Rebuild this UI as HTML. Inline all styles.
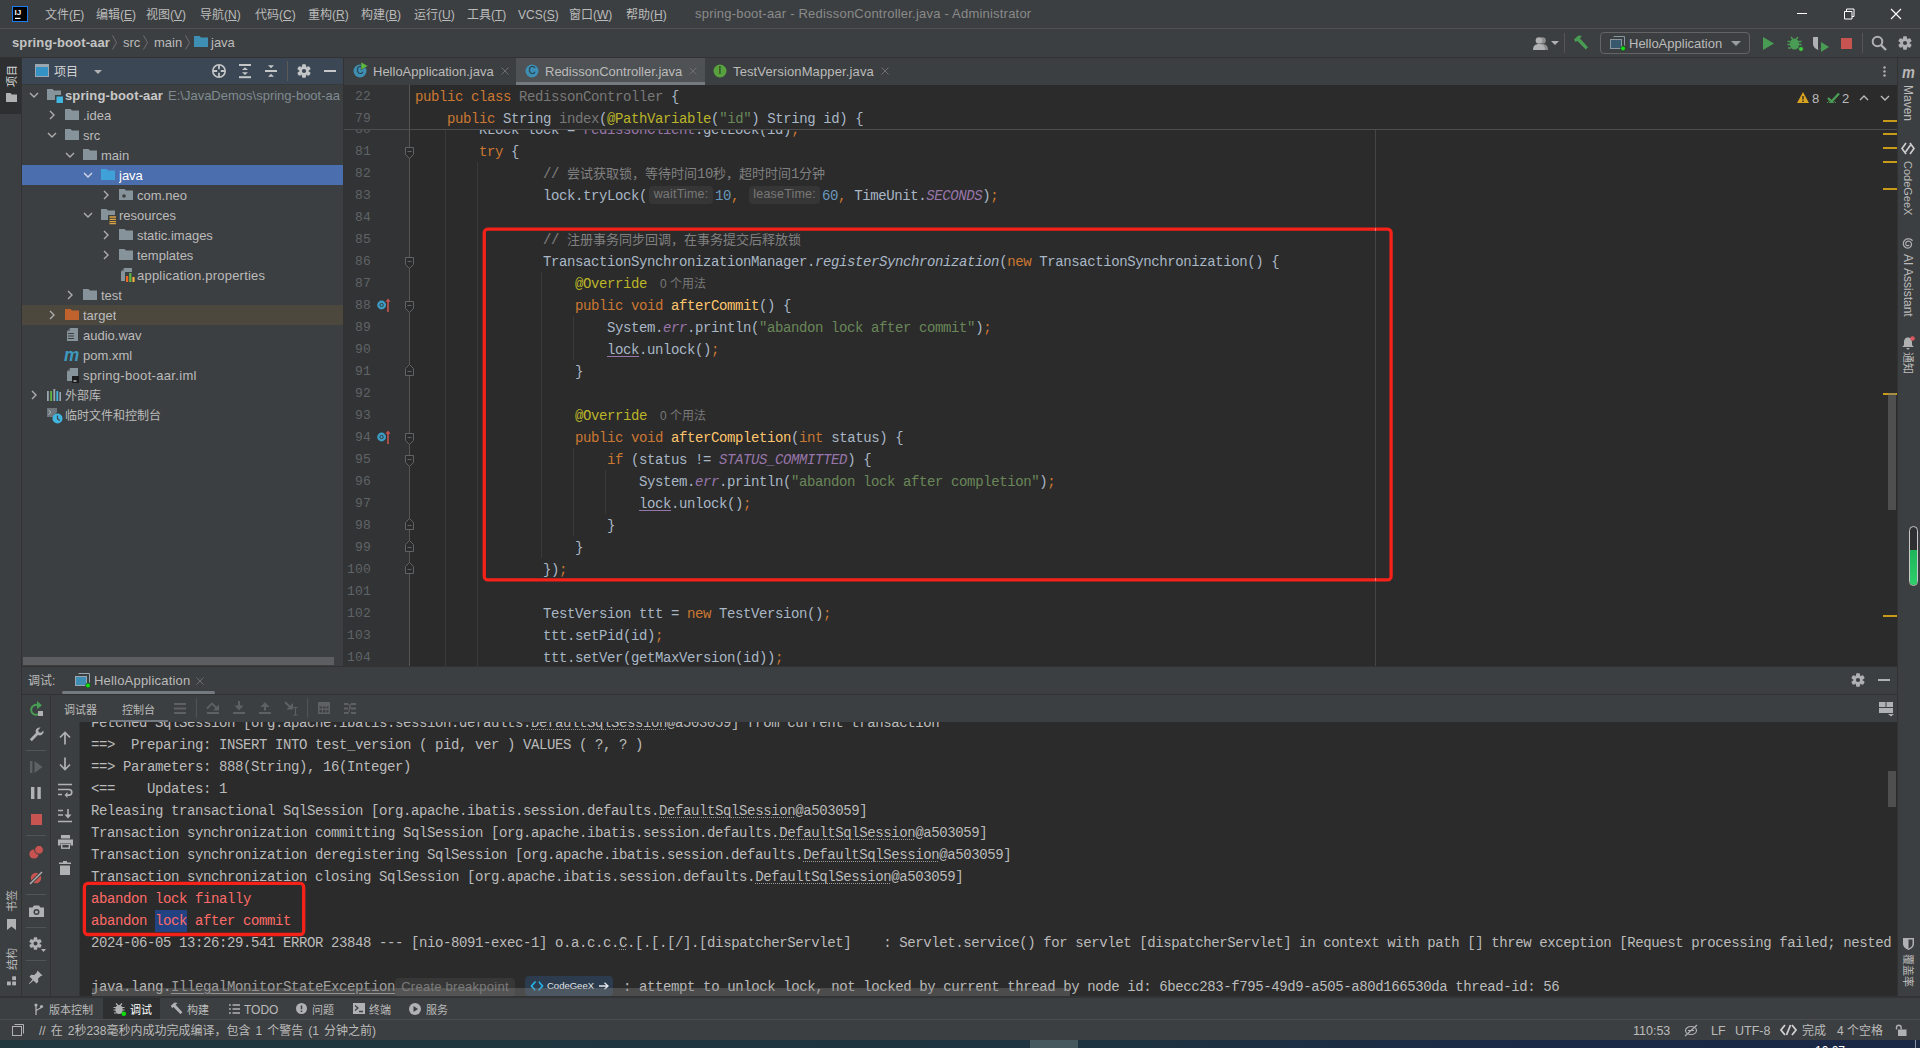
<!DOCTYPE html><html><head><meta charset="utf-8"><title>spring-boot-aar</title><style>
*{box-sizing:border-box;margin:0;padding:0}
html,body{width:1920px;height:1048px;overflow:hidden;background:#3c3f41}
body{position:relative;font-family:"Liberation Sans","Noto Sans CJK SC",sans-serif;font-size:13px;color:#bbbbbb;-webkit-font-smoothing:antialiased}
.a{position:absolute;white-space:pre}
.t{position:absolute;white-space:pre;line-height:20px;height:20px}
.c{font-size:12px}
.mono{font-family:"Liberation Mono","Noto Sans CJK SC",monospace;font-size:13.333px}
.cl{position:absolute;left:415px;height:22px;line-height:22px;white-space:pre;font-family:"Liberation Mono","Noto Sans CJK SC",monospace;font-size:14px;letter-spacing:-0.4px;color:#a9b7c6;padding-top:1px}
.z{font-size:13px;letter-spacing:0}
.ln{position:absolute;left:344px;width:27px;text-align:right;height:22px;line-height:22px;font-family:"Liberation Mono","Noto Sans CJK SC",monospace;font-size:13px;letter-spacing:0.200px;color:#606366;padding-top:1px}
.k{color:#cc7832} .s{color:#6a8759} .n{color:#6897bb} .cm{color:#808080} .an{color:#bbb529}
.f{color:#9876aa;font-style:italic} .m{color:#ffc66d} .i{font-style:italic} .g{color:#787878}
.u{text-decoration:underline;text-decoration-color:#9876aa;text-underline-offset:2px}
.hint{letter-spacing:0;font-family:"Liberation Sans","Noto Sans CJK SC",sans-serif;font-size:12px;color:#787878;background:#363636;border-radius:4px;padding:1px 4px 2px 4px}
.us{letter-spacing:0;font-family:"Liberation Sans","Noto Sans CJK SC",sans-serif;font-size:12px;color:#787878;padding-top:1px}
.co{position:absolute;left:91px;height:22px;line-height:22px;white-space:pre;font-family:"Liberation Mono","Noto Sans CJK SC",monospace;font-size:14px;letter-spacing:-0.4px;color:#bbbbbb;padding-top:1px}
.du{text-decoration:underline dotted #9a9a9a;text-decoration-thickness:1px;text-underline-offset:2px}
.r{color:#ff6b68}
.ig{position:absolute;width:1px;background:#393939}
svg{position:absolute;overflow:visible}
</style></head><body><div class="a" style="left:0px;top:0px;width:1920px;height:1048px;background:#3c3f41;"></div><div class="a" style="left:0px;top:28px;width:1920px;height:1px;background:#515151;"></div><div class="a" style="left:0px;top:57px;width:1920px;height:1px;background:#323232;"></div><div class="a" style="left:0px;top:58px;width:22px;height:56px;background:#2d2f30;"></div><div class="a" style="left:22px;top:58px;width:321px;height:26px;background:#3b4754;"></div><div class="a" style="left:22px;top:84px;width:321px;height:1px;background:#36393b;"></div><div class="a" style="left:21px;top:58px;width:1px;height:939px;background:#323232;"></div><div class="a" style="left:343px;top:58px;width:1px;height:608px;background:#323232;"></div><div class="a" style="left:344px;top:85px;width:1553px;height:581px;background:#2b2b2b;"></div><div class="a" style="left:344px;top:85px;width:65px;height:581px;background:#313335;"></div><div class="a" style="left:409px;top:85px;width:1px;height:581px;background:#555555;"></div><div class="a" style="left:1897px;top:58px;width:1px;height:940px;background:#323232;"></div><div class="a" style="left:22px;top:666px;width:1875px;height:1px;background:#323232;"></div><div class="a" style="left:79px;top:722px;width:1px;height:274px;background:#323435;"></div><div class="a" style="left:80px;top:722px;width:1817px;height:274px;background:#2b2b2b;"></div><div class="a" style="left:0px;top:996px;width:1920px;height:2px;background:#323334;"></div><div class="a" style="left:0px;top:1019px;width:1920px;height:1px;background:#4a4c4d;"></div><div class="a" style="left:0px;top:1040px;width:1920px;height:8px;background:linear-gradient(90deg,#21383f 0%,#1e3440 55%,#1a2946 80%,#1a2846 100%);"></div><div class="a" style="left:1030px;top:1040px;width:48px;height:8px;background:#45595f;"></div><div class="a" style="left:1915px;top:1040px;width:1px;height:8px;background:#8a94a3;"></div><div class="a" style="left:1815px;top:1045px;height:3px;width:40px;overflow:hidden;color:#fff;font-size:12px;line-height:12px">10:07</div><svg style="left:12px;top:6px" width="16" height="16" viewBox="0 0 16 16"><rect x="0.5" y="0.5" width="15" height="15" fill="#000" stroke="#1e7bf0" stroke-width="1"/><text x="2.6" y="9" font-family="Liberation Sans,sans-serif" font-weight="700" font-size="8" fill="#fff">IJ</text><rect x="3" y="11.800" width="5.500" height="1.200" fill="#fff"/></svg><div class="a c" style="left:45px;top:5px;height:20px;line-height:20px;color:#bbbbbb">文件(<span style="text-decoration:underline">F</span>)</div><div class="a c" style="left:96px;top:5px;height:20px;line-height:20px;color:#bbbbbb">编辑(<span style="text-decoration:underline">E</span>)</div><div class="a c" style="left:146px;top:5px;height:20px;line-height:20px;color:#bbbbbb">视图(<span style="text-decoration:underline">V</span>)</div><div class="a c" style="left:200px;top:5px;height:20px;line-height:20px;color:#bbbbbb">导航(<span style="text-decoration:underline">N</span>)</div><div class="a c" style="left:255px;top:5px;height:20px;line-height:20px;color:#bbbbbb">代码(<span style="text-decoration:underline">C</span>)</div><div class="a c" style="left:308px;top:5px;height:20px;line-height:20px;color:#bbbbbb">重构(<span style="text-decoration:underline">R</span>)</div><div class="a c" style="left:361px;top:5px;height:20px;line-height:20px;color:#bbbbbb">构建(<span style="text-decoration:underline">B</span>)</div><div class="a c" style="left:414px;top:5px;height:20px;line-height:20px;color:#bbbbbb">运行(<span style="text-decoration:underline">U</span>)</div><div class="a c" style="left:467px;top:5px;height:20px;line-height:20px;color:#bbbbbb">工具(<span style="text-decoration:underline">T</span>)</div><div class="a c" style="left:518px;top:5px;height:20px;line-height:20px;color:#bbbbbb">VCS(<span style="text-decoration:underline">S</span>)</div><div class="a c" style="left:569px;top:5px;height:20px;line-height:20px;color:#bbbbbb">窗口(<span style="text-decoration:underline">W</span>)</div><div class="a c" style="left:626px;top:5px;height:20px;line-height:20px;color:#bbbbbb">帮助(<span style="text-decoration:underline">H</span>)</div><div class="a " style="left:695px;top:4px;height:20px;line-height:20px;color:#8a8a8a;letter-spacing:0.210px">spring-boot-aar - RedissonController.java - Administrator</div><svg style="left:1797px;top:13px" width="10" height="1" viewBox="0 0 10 1"><rect width="10" height="1" fill="#ffffff"/></svg><svg style="left:1844px;top:8px" width="11" height="11" viewBox="0 0 11 11"><path d="M0.500 3.500h7.500v7.500h-7.500z M2.500 3.500v-2.500h7.500v7.500h-2" fill="none" stroke="#ffffff" stroke-width="1"/></svg><svg style="left:1891px;top:9px" width="10" height="10" viewBox="0 0 10 10"><path d="M0 0l10 10M10 0l-10 10" stroke="#ffffff" stroke-width="1.100" fill="none"/></svg><div class="a " style="left:12px;top:33px;height:20px;line-height:20px;font-weight:700;color:#c4c4c4;letter-spacing:0.130px">spring-boot-aar</div><svg style="left:112px;top:35px" width="5" height="15" viewBox="0 0 5 15"><path d="M0.5 0.5l4 7-4 7" fill="none" stroke="#6e6e6e" stroke-width="1"/></svg><div class="a " style="left:123px;top:33px;height:20px;line-height:20px;">src</div><svg style="left:143px;top:35px" width="5" height="15" viewBox="0 0 5 15"><path d="M0.5 0.5l4 7-4 7" fill="none" stroke="#6e6e6e" stroke-width="1"/></svg><div class="a " style="left:154px;top:33px;height:20px;line-height:20px;">main</div><svg style="left:185px;top:35px" width="5" height="15" viewBox="0 0 5 15"><path d="M0.5 0.5l4 7-4 7" fill="none" stroke="#6e6e6e" stroke-width="1"/></svg><svg style="left:194px;top:36px" width="14" height="11" viewBox="0 0 14 11"><path d="M0 0h5.5l1.5 1.500H14v9.500H0z" fill="#3e8fb3"/></svg><div class="a " style="left:211px;top:33px;height:20px;line-height:20px;">java</div><svg style="left:1533px;top:36px" width="16" height="14" viewBox="0 0 16 14"><circle cx="9.5" cy="4.5" r="3.3" fill="#8c8c8c"/><path d="M4 14c0-4 2-6 5.5-6s5.5 2 5.5 6z" fill="#8c8c8c"/><circle cx="6" cy="4.5" r="3.3" fill="#afb1b3"/><path d="M0 14c0-4 2-6 6-6s6 2 6 6z" fill="#afb1b3"/></svg><svg style="left:1551px;top:41px" width="8" height="4" viewBox="0 0 8 4"><path d="M0 0h8l-4 4z" fill="#afb1b3"/></svg><div class="a" style="left:1564px;top:33px;width:1px;height:20px;background:#555555;"></div><svg style="left:1573px;top:35px" width="16" height="16" viewBox="0 0 16 16"><path d="M1 4.5L5.5 0.5l3.5 0.5-2.2 2.2 8.2 9-2.3 2.3-8.5-8.7-1.5 1.5z" fill="#499c54"/></svg><div class="a" style="left:1600px;top:32px;width:150px;height:22px;border:1px solid #646464;border-radius:4px"></div><svg style="left:1610px;top:36px" width="16" height="15" viewBox="0 0 16 15"><path d="M3.5 0.5h11v9" fill="none" stroke="#8a969d" stroke-width="1"/><rect x="0.5" y="3.5" width="11" height="9" fill="#38596d" stroke="#8a969d"/><circle cx="13" cy="12.5" r="2.4" fill="#10e010" stroke="#2b2b2b" stroke-width="0.6"/></svg><div class="a " style="left:1629px;top:34px;height:20px;line-height:20px;color:#bbbbbb">HelloApplication</div><svg style="left:1731px;top:41px" width="10" height="5" viewBox="0 0 10 5"><path d="M0 0h10l-5 5z" fill="#9a9da0"/></svg><svg style="left:1763px;top:37px" width="11" height="13" viewBox="0 0 11 13"><path d="M0 0l11 6.500-11 6.500z" fill="#499c54"/></svg><svg style="left:1787px;top:35px" width="17" height="17" viewBox="0 0 17 17"><ellipse cx="7.5" cy="9" rx="4.6" ry="5.6" fill="#499c54"/><path d="M4 2l2 2.5M11 2l-2 2.5M0.5 6.5h3M0.5 9.5h3M1 13h3M14.5 6.5h-3M14.5 9.5h-3M14 13h-3" stroke="#499c54" stroke-width="1.4" fill="none"/><circle cx="14" cy="14" r="2.4" fill="#3dd13d" stroke="#3c3f41" stroke-width="0.8"/></svg><svg style="left:1812px;top:36px" width="17" height="16" viewBox="0 0 17 16"><path d="M1 1h10v7c0 3-3 5-5 6-2-1-5-3-5-6z" fill="#afb1b3"/><path d="M6 1h5v7c0 3-3 5-5 6z" fill="#3c3f41"/><path d="M9 6l8 5-8 5z" fill="#499c54"/></svg><div class="a" style="left:1841px;top:38px;width:11px;height:11px;background:#c75450;"></div><div class="a" style="left:1862px;top:33px;width:1px;height:20px;background:#555555;"></div><svg style="left:1871px;top:35px" width="16" height="16" viewBox="0 0 16 16"><circle cx="6.5" cy="6.5" r="4.8" fill="none" stroke="#afb1b3" stroke-width="2"/><path d="M10 10l5 5" stroke="#afb1b3" stroke-width="2.4"/></svg><svg style="left:1898px;top:36px" width="14" height="14" viewBox="0 0 14 14"><g transform="translate(7 7)"><path d="M-1.600 -6.800h3.200l0.700 3h-4.600z" transform="rotate(0)" fill="#afb1b3"/><path d="M-1.600 -6.800h3.200l0.700 3h-4.600z" transform="rotate(60)" fill="#afb1b3"/><path d="M-1.600 -6.800h3.200l0.700 3h-4.600z" transform="rotate(120)" fill="#afb1b3"/><path d="M-1.600 -6.800h3.200l0.700 3h-4.600z" transform="rotate(180)" fill="#afb1b3"/><path d="M-1.600 -6.800h3.200l0.700 3h-4.600z" transform="rotate(240)" fill="#afb1b3"/><path d="M-1.600 -6.800h3.200l0.700 3h-4.600z" transform="rotate(300)" fill="#afb1b3"/><circle r="4.400" fill="#afb1b3"/><circle r="2.100" fill="#3c3f41"/></g></svg><div class="a c" style="left:12px;top:87px;height:16px;line-height:16px;color:#d6d6d6;font-size:11px;transform-origin:0 0;transform:rotate(-90deg) translate(0,-8px)">项目</div><svg style="left:6px;top:93px" width="11" height="9" viewBox="0 0 11 9"><path d="M0 0h4.5l1.2 1.5H11V9H0z" fill="#afb1b3"/></svg><div class="a c" style="left:12px;top:912px;height:16px;line-height:16px;color:#bbbbbb;font-size:11px;transform-origin:0 0;transform:rotate(-90deg) translate(0,-8px)">书签</div><svg style="left:7px;top:919px" width="9" height="11" viewBox="0 0 9 11"><path d="M0 0h9v11l-4.5-3.5L0 11z" fill="#afb1b3"/></svg><div class="a c" style="left:12px;top:970px;height:16px;line-height:16px;color:#bbbbbb;font-size:11px;transform-origin:0 0;transform:rotate(-90deg) translate(0,-8px)">结构</div><svg style="left:7px;top:976px" width="10" height="10" viewBox="0 0 10 10"><rect x="0" y="5.500" width="3.800" height="3.800" fill="#afb1b3"/><rect x="5.200" y="5.500" width="3.800" height="3.800" fill="#afb1b3"/><rect x="5.200" y="0.300" width="3.800" height="3.800" fill="#afb1b3"/></svg><svg style="left:35px;top:64px" width="14" height="14" viewBox="0 0 14 14"><rect x="0.5" y="0.5" width="13" height="12" fill="#3592c4" stroke="#9aa7b0"/><rect x="0.5" y="0.5" width="13" height="2.5" fill="#9aa7b0"/></svg><div class="a c" style="left:54px;top:62px;height:20px;line-height:20px;color:#d4d4d4">项目</div><svg style="left:94px;top:70px" width="8" height="4" viewBox="0 0 8 4"><path d="M0 0h8l-4 4z" fill="#afb1b3"/></svg><svg style="left:212px;top:64px" width="14" height="14" viewBox="0 0 14 14"><circle cx="7" cy="7" r="6.200" fill="none" stroke="#c4c6c7" stroke-width="1.600"/><path d="M7 1v4.200M7 8.800v4.200M1 7h4.200M8.800 7h4.200" stroke="#c4c6c7" stroke-width="1.800"/></svg><svg style="left:239px;top:64px" width="12" height="14" viewBox="0 0 12 14"><rect x="0" y="0" width="12" height="2" fill="#c4c6c7"/><rect x="0" y="12.200" width="12" height="2" fill="#c4c6c7"/><path d="M6 3.300l3 2.700h-6zM6 10.900l3-2.700h-6z" fill="#c4c6c7"/></svg><svg style="left:265px;top:64px" width="12" height="14" viewBox="0 0 12 14"><rect x="0" y="6" width="12" height="2" fill="#c4c6c7"/><path d="M6 4.300l3-3h-6zM6 9.700l3 3h-6z" fill="#c4c6c7"/></svg><div class="a" style="left:287px;top:61px;width:1px;height:20px;background:#5a5a58;"></div><svg style="left:297px;top:64px" width="14" height="14" viewBox="0 0 14 14"><g transform="translate(7 7)"><path d="M-1.600 -6.800h3.200l0.700 3h-4.600z" transform="rotate(0)" fill="#c4c6c7"/><path d="M-1.600 -6.800h3.200l0.700 3h-4.600z" transform="rotate(60)" fill="#c4c6c7"/><path d="M-1.600 -6.800h3.200l0.700 3h-4.600z" transform="rotate(120)" fill="#c4c6c7"/><path d="M-1.600 -6.800h3.200l0.700 3h-4.600z" transform="rotate(180)" fill="#c4c6c7"/><path d="M-1.600 -6.800h3.200l0.700 3h-4.600z" transform="rotate(240)" fill="#c4c6c7"/><path d="M-1.600 -6.800h3.200l0.700 3h-4.600z" transform="rotate(300)" fill="#c4c6c7"/><circle r="4.400" fill="#c4c6c7"/><circle r="2.100" fill="#3b4754"/></g></svg><div class="a" style="left:324px;top:70px;width:12px;height:2px;background:#c4c6c7;"></div><div class="a" style="left:22px;top:165px;width:321px;height:20px;background:#4b6eaf;"></div><div class="a" style="left:22px;top:305px;width:321px;height:20px;background:#4c483e;"></div><svg style="left:29px;top:92px" width="10" height="6" viewBox="0 0 10 6"><path d="M1 1l4 4 4-4" fill="none" stroke="#adadad" stroke-width="1.4"/></svg><svg style="left:47px;top:89px" width="14" height="11" viewBox="0 0 14 11"><path d="M0 0h5.5l1.5 1.500H14v9.500H0z" fill="#87939a"/></svg><svg style="left:55px;top:95px" width="8" height="8" viewBox="0 0 8 8"><rect width="8" height="8" fill="#3c3f41"/><rect x="1.5" y="1.5" width="6.5" height="6.5" fill="#40b6e0"/></svg><div class="a" style="left:65px;top:86px;height:20px;line-height:20px;color:#bbbbbb;max-width:278px;overflow:hidden"><b style="color:#c8c8c8;letter-spacing:0.130px">spring-boot-aar</b><span style="color:#7f8b91;margin-left:5px">E:\JavaDemos\spring-boot-aa</span></div><svg style="left:49px;top:110px" width="6" height="10" viewBox="0 0 6 10"><path d="M1 1l4 4-4 4" fill="none" stroke="#adadad" stroke-width="1.4"/></svg><svg style="left:65px;top:109px" width="14" height="11" viewBox="0 0 14 11"><path d="M0 0h5.5l1.5 1.500H14v9.500H0z" fill="#87939a"/></svg><div class="a" style="left:83px;top:106px;height:20px;line-height:20px;color:#bbbbbb;max-width:260px;overflow:hidden">.idea</div><svg style="left:47px;top:132px" width="10" height="6" viewBox="0 0 10 6"><path d="M1 1l4 4 4-4" fill="none" stroke="#adadad" stroke-width="1.4"/></svg><svg style="left:65px;top:129px" width="14" height="11" viewBox="0 0 14 11"><path d="M0 0h5.5l1.5 1.500H14v9.500H0z" fill="#87939a"/></svg><div class="a" style="left:83px;top:126px;height:20px;line-height:20px;color:#bbbbbb;max-width:260px;overflow:hidden">src</div><svg style="left:65px;top:152px" width="10" height="6" viewBox="0 0 10 6"><path d="M1 1l4 4 4-4" fill="none" stroke="#adadad" stroke-width="1.4"/></svg><svg style="left:83px;top:149px" width="14" height="11" viewBox="0 0 14 11"><path d="M0 0h5.5l1.5 1.500H14v9.500H0z" fill="#87939a"/></svg><div class="a" style="left:101px;top:146px;height:20px;line-height:20px;color:#bbbbbb;max-width:242px;overflow:hidden">main</div><svg style="left:83px;top:172px" width="10" height="6" viewBox="0 0 10 6"><path d="M1 1l4 4 4-4" fill="none" stroke="#d0d7e5" stroke-width="1.4"/></svg><svg style="left:101px;top:169px" width="14" height="11" viewBox="0 0 14 11"><path d="M0 0h5.5l1.5 1.500H14v9.500H0z" fill="#40a1d8"/></svg><div class="a" style="left:119px;top:166px;height:20px;line-height:20px;color:#ffffff;max-width:224px;overflow:hidden">java</div><svg style="left:103px;top:190px" width="6" height="10" viewBox="0 0 6 10"><path d="M1 1l4 4-4 4" fill="none" stroke="#adadad" stroke-width="1.4"/></svg><svg style="left:119px;top:189px" width="14" height="11" viewBox="0 0 14 11"><path d="M0 0h5.5l1.5 1.500H14v9.500H0z" fill="#87939a"/></svg><svg style="left:122px;top:194px" width="4" height="4" viewBox="0 0 4 4"><circle cx="2" cy="2" r="1.8" fill="#3c3f41"/></svg><div class="a" style="left:137px;top:186px;height:20px;line-height:20px;color:#bbbbbb;max-width:206px;overflow:hidden">com.neo</div><svg style="left:83px;top:212px" width="10" height="6" viewBox="0 0 10 6"><path d="M1 1l4 4 4-4" fill="none" stroke="#adadad" stroke-width="1.4"/></svg><svg style="left:101px;top:209px" width="14" height="11" viewBox="0 0 14 11"><path d="M0 0h5.5l1.5 1.500H14v9.500H0z" fill="#87939a"/></svg><svg style="left:108px;top:215px" width="8" height="9" viewBox="0 0 8 9"><rect width="8" height="9" fill="#3c3f41"/><path d="M1.5 2h6.5M1.5 4.3h6.5M1.5 6.6h6.5M1.5 8.6h6.5" stroke="#d9a343" stroke-width="1.3"/></svg><div class="a" style="left:119px;top:206px;height:20px;line-height:20px;color:#bbbbbb;max-width:224px;overflow:hidden">resources</div><svg style="left:103px;top:230px" width="6" height="10" viewBox="0 0 6 10"><path d="M1 1l4 4-4 4" fill="none" stroke="#adadad" stroke-width="1.4"/></svg><svg style="left:119px;top:229px" width="14" height="11" viewBox="0 0 14 11"><path d="M0 0h5.5l1.5 1.500H14v9.500H0z" fill="#87939a"/></svg><div class="a" style="left:137px;top:226px;height:20px;line-height:20px;color:#bbbbbb;max-width:206px;overflow:hidden">static.images</div><svg style="left:103px;top:250px" width="6" height="10" viewBox="0 0 6 10"><path d="M1 1l4 4-4 4" fill="none" stroke="#adadad" stroke-width="1.4"/></svg><svg style="left:119px;top:249px" width="14" height="11" viewBox="0 0 14 11"><path d="M0 0h5.5l1.5 1.500H14v9.500H0z" fill="#87939a"/></svg><div class="a" style="left:137px;top:246px;height:20px;line-height:20px;color:#bbbbbb;max-width:206px;overflow:hidden">templates</div><svg style="left:120px;top:268px" width="13" height="14" viewBox="0 0 13 14"><path d="M4.5 0H12v13H1V3.5z" fill="#87939a"/><path d="M4 0L1 3h3z" fill="#5d666b"/></svg><svg style="left:126px;top:272px" width="9" height="10" viewBox="0 0 9 10"><rect x="-1" y="0" width="10" height="10" fill="#3c3f41"/><rect x="0" y="4" width="2.2" height="6" fill="#f26522"/><rect x="3.2" y="1" width="2.2" height="9" fill="#62b543"/><rect x="6.4" y="5" width="2.2" height="5" fill="#f4af3d"/></svg><div class="a" style="left:137px;top:266px;height:20px;line-height:20px;color:#bbbbbb;max-width:206px;overflow:hidden"><span style="letter-spacing:0.210px">application.properties</span></div><svg style="left:67px;top:290px" width="6" height="10" viewBox="0 0 6 10"><path d="M1 1l4 4-4 4" fill="none" stroke="#adadad" stroke-width="1.4"/></svg><svg style="left:83px;top:289px" width="14" height="11" viewBox="0 0 14 11"><path d="M0 0h5.5l1.5 1.500H14v9.500H0z" fill="#87939a"/></svg><div class="a" style="left:101px;top:286px;height:20px;line-height:20px;color:#bbbbbb;max-width:242px;overflow:hidden">test</div><svg style="left:49px;top:310px" width="6" height="10" viewBox="0 0 6 10"><path d="M1 1l4 4-4 4" fill="none" stroke="#adadad" stroke-width="1.4"/></svg><svg style="left:65px;top:309px" width="14" height="11" viewBox="0 0 14 11"><path d="M0 0h5.5l1.5 1.500H14v9.500H0z" fill="#c0622d"/></svg><div class="a" style="left:83px;top:306px;height:20px;line-height:20px;color:#bbbbbb;max-width:260px;overflow:hidden">target</div><svg style="left:66px;top:328px" width="13" height="14" viewBox="0 0 13 14"><path d="M4.5 0H12v13H1V3.5z" fill="#87939a"/><path d="M4 0L1 3h3z" fill="#5d666b"/></svg><svg style="left:68px;top:333px" width="8" height="7" viewBox="0 0 8 7"><path d="M0 0.5h6M0 3h6M0 5.5h6" stroke="#3c3f41" stroke-width="1.1"/></svg><div class="a" style="left:83px;top:326px;height:20px;line-height:20px;color:#bbbbbb;max-width:260px;overflow:hidden">audio.wav</div><div class="a" style="left:64px;top:343px;height:24px;line-height:24px;font-weight:700;font-style:italic;font-size:19px;color:#3e9ac0;transform-origin:0 50%;transform:scaleX(0.900)">m</div><div class="a" style="left:83px;top:346px;height:20px;line-height:20px;color:#bbbbbb;max-width:260px;overflow:hidden">pom.xml</div><svg style="left:66px;top:368px" width="13" height="14" viewBox="0 0 13 14"><path d="M4.5 0H12v13H1V3.5z" fill="#87939a"/><path d="M4 0L1 3h3z" fill="#5d666b"/></svg><svg style="left:72px;top:376px" width="7" height="7" viewBox="0 0 7 7"><rect width="7" height="7" fill="#1d1d1d"/><rect x="1.5" y="4.5" width="3" height="1" fill="#fff"/></svg><div class="a" style="left:83px;top:366px;height:20px;line-height:20px;color:#bbbbbb;max-width:260px;overflow:hidden"><span style="letter-spacing:0.320px">spring-boot-aar.iml</span></div><svg style="left:31px;top:390px" width="6" height="10" viewBox="0 0 6 10"><path d="M1 1l4 4-4 4" fill="none" stroke="#adadad" stroke-width="1.4"/></svg><svg style="left:47px;top:389px" width="14" height="12" viewBox="0 0 14 12"><rect x="0" y="2" width="1.8" height="10" fill="#9aa7b0"/><rect x="3.2" y="2" width="1.8" height="10" fill="#62b543"/><rect x="6.4" y="0" width="1.8" height="12" fill="#9aa7b0"/><rect x="9.4" y="2" width="1.8" height="10" fill="#40b6e0"/><rect x="12.4" y="3" width="1.6" height="9" fill="#9aa7b0"/></svg><div class="a" style="left:65px;top:386px;height:20px;line-height:20px;color:#bbbbbb;max-width:278px;overflow:hidden"><span class="c">外部库</span></div><svg style="left:47px;top:408px" width="16" height="16" viewBox="0 0 16 16"><path d="M0 0h10v4l-4 5H0z" fill="#6b757b"/><path d="M1.5 2l2.5 2.3-2.5 2.3" stroke="#b4bcc0" stroke-width="1" fill="none"/><circle cx="10.5" cy="10.5" r="5" fill="#40b6e0"/><path d="M10.5 7.5v3.3l2.2 1.6" stroke="#3c3f41" stroke-width="1.2" fill="none"/></svg><div class="a" style="left:65px;top:406px;height:20px;line-height:20px;color:#bbbbbb;max-width:278px;overflow:hidden"><span class="c">临时文件和控制台</span></div><div class="a" style="left:23px;top:657px;width:311px;height:8px;background:#5c5e60;"></div><div class="a" style="left:516px;top:58px;width:189px;height:27px;background:#4e5254;"></div><div class="a" style="left:516px;top:82px;width:189px;height:3px;background:#747a80;"></div><svg style="left:353px;top:64px" width="14" height="14" viewBox="0 0 14 14"><circle cx="7" cy="7" r="6.5" fill="#3e8fb3"/><text x="7" y="10.3" text-anchor="middle" font-family="Liberation Sans,sans-serif" font-size="10" font-weight="400" fill="#23343d">C</text></svg><svg style="left:361px;top:62px" width="7" height="8" viewBox="0 0 7 8"><path d="M0 0l7 4-7 4z" fill="#5fb840" stroke="#3c3f41" stroke-width="0.500"/></svg><div class="a " style="left:373px;top:62px;height:20px;line-height:20px;">HelloApplication.java</div><svg style="left:501px;top:67px" width="8" height="8" viewBox="0 0 8 8"><path d="M0.5 0.5l7 7M7.5 0.5l-7 7" stroke="#6e6e6e" stroke-width="1" fill="none"/></svg><svg style="left:525px;top:64px" width="14" height="14" viewBox="0 0 14 14"><circle cx="7" cy="7" r="6.5" fill="#3e8fb3"/><text x="7" y="10.3" text-anchor="middle" font-family="Liberation Sans,sans-serif" font-size="10" font-weight="400" fill="#23343d">C</text></svg><div class="a " style="left:545px;top:62px;height:20px;line-height:20px;">RedissonController.java</div><svg style="left:689px;top:67px" width="8" height="8" viewBox="0 0 8 8"><path d="M0.5 0.5l7 7M7.5 0.5l-7 7" stroke="#6e6e6e" stroke-width="1" fill="none"/></svg><svg style="left:713px;top:64px" width="14" height="14" viewBox="0 0 14 14"><circle cx="7" cy="7" r="6.5" fill="#59a13f"/><text x="7" y="10.3" text-anchor="middle" font-family="Liberation Sans,sans-serif" font-size="10" font-weight="400" fill="#1f3318">I</text></svg><div class="a " style="left:733px;top:62px;height:20px;line-height:20px;letter-spacing:0.130px">TestVersionMapper.java</div><svg style="left:881px;top:67px" width="8" height="8" viewBox="0 0 8 8"><path d="M0.5 0.5l7 7M7.5 0.5l-7 7" stroke="#6e6e6e" stroke-width="1" fill="none"/></svg><svg style="left:1883px;top:66px" width="3" height="11" viewBox="0 0 3 11"><circle cx="1.5" cy="1.5" r="1.2" fill="#afb1b3"/><circle cx="1.5" cy="5.5" r="1.2" fill="#afb1b3"/><circle cx="1.5" cy="9.5" r="1.2" fill="#afb1b3"/></svg><div class="a" style="left:445px;top:118px;width:1px;height:550px;background:#393939;"></div><div class="a" style="left:477px;top:162px;width:1px;height:506px;background:#393939;"></div><div class="a" style="left:541px;top:272px;width:1px;height:286px;background:#393939;"></div><div class="a" style="left:573px;top:316px;width:1px;height:44px;background:#393939;"></div><div class="a" style="left:573px;top:448px;width:1px;height:88px;background:#393939;"></div><div class="a" style="left:605px;top:470px;width:1px;height:44px;background:#393939;"></div><div class="a" style="left:1375px;top:85px;width:1px;height:581px;background:#454545;"></div><div class="a" style="left:344px;top:130px;width:1553px;height:536px;overflow:hidden"><div class="ln" style="left:0;top:-12px">80</div><div class="cl" style="left:71px;top:-12px">        RLock lock = <span style="color:#9876aa">redissonClient</span>.getLock(id)<span class="k">;</span></div><div class="ln" style="left:0;top:10px">81</div><div class="cl" style="left:71px;top:10px">        <span class="k">try</span> {</div><div class="ln" style="left:0;top:32px">82</div><div class="cl" style="left:71px;top:32px">                <span class="cm">// <span class="z">尝试获取锁，等待时间</span>10<span class="z">秒，超时时间</span>1<span class="z">分钟</span></span></div><div class="ln" style="left:0;top:54px">83</div><div class="cl" style="left:71px;top:54px">                lock.tryLock(<span class="hint" style="display:inline-block;width:64px;margin:0 2px 0 2px;height:18px;line-height:17px;vertical-align:2px;text-align:center;padding:0;font-size:12.500px;letter-spacing:0.200px">waitTime:</span><span class="n">10</span><span class="k">,</span> <span class="hint" style="display:inline-block;width:71px;margin:0 2px 0 2px;height:18px;line-height:17px;vertical-align:2px;text-align:center;padding:0;font-size:12.500px;letter-spacing:0.200px">leaseTime:</span><span class="n">60</span><span class="k">,</span> TimeUnit.<span class="f">SECONDS</span>)<span class="k">;</span></div><div class="ln" style="left:0;top:76px">84</div><div class="ln" style="left:0;top:98px">85</div><div class="cl" style="left:71px;top:98px">                <span class="cm">// <span class="z">注册事务同步回调，在事务提交后释放锁</span></span></div><div class="ln" style="left:0;top:120px">86</div><div class="cl" style="left:71px;top:120px">                TransactionSynchronizationManager.<span class="i">registerSynchronization</span>(<span class="k">new</span> TransactionSynchronization() {</div><div class="ln" style="left:0;top:142px">87</div><div class="cl" style="left:71px;top:142px">                    <span class="an">@Override</span></div><div class="ln" style="left:0;top:164px">88</div><div class="cl" style="left:71px;top:164px">                    <span class="k">public void</span> <span class="m">afterCommit</span>() {</div><div class="ln" style="left:0;top:186px">89</div><div class="cl" style="left:71px;top:186px">                        System.<span class="f">err</span>.println(<span class="s">"abandon lock after commit"</span>)<span class="k">;</span></div><div class="ln" style="left:0;top:208px">90</div><div class="cl" style="left:71px;top:208px">                        <span class="u">lock</span>.unlock()<span class="k">;</span></div><div class="ln" style="left:0;top:230px">91</div><div class="cl" style="left:71px;top:230px">                    }</div><div class="ln" style="left:0;top:252px">92</div><div class="ln" style="left:0;top:274px">93</div><div class="cl" style="left:71px;top:274px">                    <span class="an">@Override</span></div><div class="ln" style="left:0;top:296px">94</div><div class="cl" style="left:71px;top:296px">                    <span class="k">public void</span> <span class="m">afterCompletion</span>(<span class="k">int</span> status) {</div><div class="ln" style="left:0;top:318px">95</div><div class="cl" style="left:71px;top:318px">                        <span class="k">if</span> (status != <span class="f">STATUS_COMMITTED</span>) {</div><div class="ln" style="left:0;top:340px">96</div><div class="cl" style="left:71px;top:340px">                            System.<span class="f">err</span>.println(<span class="s">"abandon lock after completion"</span>)<span class="k">;</span></div><div class="ln" style="left:0;top:362px">97</div><div class="cl" style="left:71px;top:362px">                            <span class="u">lock</span>.unlock()<span class="k">;</span></div><div class="ln" style="left:0;top:384px">98</div><div class="cl" style="left:71px;top:384px">                        }</div><div class="ln" style="left:0;top:406px">99</div><div class="cl" style="left:71px;top:406px">                    }</div><div class="ln" style="left:0;top:428px">100</div><div class="cl" style="left:71px;top:428px">                })<span class="k">;</span></div><div class="ln" style="left:0;top:450px">101</div><div class="ln" style="left:0;top:472px">102</div><div class="cl" style="left:71px;top:472px">                TestVersion ttt = <span class="k">new</span> TestVersion()<span class="k">;</span></div><div class="ln" style="left:0;top:494px">103</div><div class="cl" style="left:71px;top:494px">                ttt.setPid(id)<span class="k">;</span></div><div class="ln" style="left:0;top:516px">104</div><div class="cl" style="left:71px;top:516px">                ttt.setVer(getMaxVersion(id))<span class="k">;</span></div><div class="a us" style="left:316px;top:142px;height:22px;line-height:22px">0 个用法</div><div class="a us" style="left:316px;top:274px;height:22px;line-height:22px">0 个用法</div></div><div class="a" style="left:344px;top:85px;width:1553px;height:44px;background:#2b2b2b;"></div><div class="a" style="left:344px;top:85px;width:65px;height:44px;background:#313335;"></div><div class="a" style="left:409px;top:85px;width:1px;height:44px;background:#555555;"></div><div class="a" style="left:344px;top:129px;width:1553px;height:1px;background:#4e4e4e;"></div><div class="ln" style="top:85px">22</div><div class="ln" style="top:107px">79</div><div class="cl" style="top:85px"><span class="k">public class</span> <span class="g">RedissonController</span> {</div><div class="cl" style="top:107px">    <span class="k">public</span> String <span class="g">index</span>(<span class="an">@PathVariable</span>(<span class="s">"id"</span>) String id) {</div><svg style="left:405px;top:147px" width="9" height="12" viewBox="0 0 9 12"><path d="M0.5 0.5h8v7l-4 4-4-4z" fill="#2b2b2b" stroke="#606366"/><path d="M2.5 4.500h4" stroke="#606366"/></svg><svg style="left:405px;top:257px" width="9" height="12" viewBox="0 0 9 12"><path d="M0.5 0.5h8v7l-4 4-4-4z" fill="#2b2b2b" stroke="#606366"/><path d="M2.5 4.500h4" stroke="#606366"/></svg><svg style="left:405px;top:301px" width="9" height="12" viewBox="0 0 9 12"><path d="M0.5 0.5h8v7l-4 4-4-4z" fill="#2b2b2b" stroke="#606366"/><path d="M2.5 4.500h4" stroke="#606366"/></svg><svg style="left:405px;top:433px" width="9" height="12" viewBox="0 0 9 12"><path d="M0.5 0.5h8v7l-4 4-4-4z" fill="#2b2b2b" stroke="#606366"/><path d="M2.5 4.500h4" stroke="#606366"/></svg><svg style="left:405px;top:455px" width="9" height="12" viewBox="0 0 9 12"><path d="M0.5 0.5h8v7l-4 4-4-4z" fill="#2b2b2b" stroke="#606366"/><path d="M2.5 4.500h4" stroke="#606366"/></svg><svg style="left:405px;top:364px" width="9" height="12" viewBox="0 0 9 12"><path d="M0.5 11.5h8v-7l-4-4-4 4z" fill="#2b2b2b" stroke="#606366"/><path d="M2.5 7.500h4" stroke="#606366"/></svg><svg style="left:405px;top:518px" width="9" height="12" viewBox="0 0 9 12"><path d="M0.5 11.5h8v-7l-4-4-4 4z" fill="#2b2b2b" stroke="#606366"/><path d="M2.5 7.500h4" stroke="#606366"/></svg><svg style="left:405px;top:540px" width="9" height="12" viewBox="0 0 9 12"><path d="M0.5 11.5h8v-7l-4-4-4 4z" fill="#2b2b2b" stroke="#606366"/><path d="M2.5 7.500h4" stroke="#606366"/></svg><svg style="left:405px;top:562px" width="9" height="12" viewBox="0 0 9 12"><path d="M0.5 11.5h8v-7l-4-4-4 4z" fill="#2b2b2b" stroke="#606366"/><path d="M2.5 7.500h4" stroke="#606366"/></svg><svg style="left:377px;top:298px" width="14" height="14" viewBox="0 0 14 14"><circle cx="4.6" cy="7" r="4.4" fill="#3e9dc4"/><circle cx="4.6" cy="7" r="1.7" fill="none" stroke="#313335" stroke-width="0.9"/><path d="M11 14V2.5" stroke="#c75450" stroke-width="1.6"/><path d="M8.4 3.8L11 0.6l2.6 3.2z" fill="#c75450"/></svg><svg style="left:377px;top:430px" width="14" height="14" viewBox="0 0 14 14"><circle cx="4.6" cy="7" r="4.4" fill="#3e9dc4"/><circle cx="4.6" cy="7" r="1.7" fill="none" stroke="#313335" stroke-width="0.9"/><path d="M11 14V2.5" stroke="#c75450" stroke-width="1.6"/><path d="M8.4 3.8L11 0.6l2.6 3.2z" fill="#c75450"/></svg><svg style="left:482px;top:227px" width="912" height="355" viewBox="0 0 912 355"><rect x="2.250" y="2.200" width="906.850" height="350.700" rx="3.500" fill="none" stroke="#f6221a" stroke-width="3.300"/></svg><div class="a" style="left:1375px;top:228px;width:1px;height:3px;background:#f8766f;"></div><div class="a" style="left:1375px;top:578px;width:1px;height:3px;background:#f8766f;"></div><svg style="left:1797px;top:92px" width="12" height="11" viewBox="0 0 12 11"><path d="M6 0l6 11H0z" fill="#d9a31f"/><path d="M6 4v3.5M6 8.6v1.4" stroke="#2b2b2b" stroke-width="1.4"/></svg><div class="a " style="left:1812px;top:89px;height:20px;line-height:20px;color:#bbbbbb">8</div><svg style="left:1827px;top:92px" width="13" height="12" viewBox="0 0 13 12"><path d="M1 6l3.5 3.5L12 1.5" fill="none" stroke="#499c54" stroke-width="2.4"/><path d="M0 11l1.5-1.5L3 11l1.5-1.5L6 11l1.5-1.5L9 11" fill="none" stroke="#499c54" stroke-width="0.9"/></svg><div class="a " style="left:1842px;top:89px;height:20px;line-height:20px;color:#bbbbbb">2</div><svg style="left:1859px;top:95px" width="10" height="6" viewBox="0 0 10 6"><path d="M1 5l4-4 4 4" fill="none" stroke="#bbbbbb" stroke-width="1.4"/></svg><svg style="left:1880px;top:95px" width="10" height="6" viewBox="0 0 10 6"><path d="M1 1l4 4 4-4" fill="none" stroke="#bbbbbb" stroke-width="1.4"/></svg><div class="a" style="left:1883px;top:120px;width:14px;height:2px;background:#c79a17;"></div><div class="a" style="left:1883px;top:133px;width:14px;height:2px;background:#c79a17;"></div><div class="a" style="left:1883px;top:147px;width:14px;height:2px;background:#c79a17;"></div><div class="a" style="left:1883px;top:161px;width:14px;height:2px;background:#c79a17;"></div><div class="a" style="left:1883px;top:188px;width:14px;height:2px;background:#c79a17;"></div><div class="a" style="left:1883px;top:393px;width:14px;height:2px;background:#c79a17;"></div><div class="a" style="left:1883px;top:615px;width:14px;height:2px;background:#c79a17;"></div><div class="a" style="left:1888px;top:393px;width:8px;height:117px;background:rgba(128,128,128,0.42);"></div><div class="a" style="left:1902px;top:61px;height:24px;line-height:24px;font-weight:700;font-style:italic;font-size:17px;color:#b8b8b8;transform-origin:0 50%;transform:scaleX(0.850)">m</div><div class="a " style="left:1908px;top:85px;height:16px;line-height:16px;color:#bbbbbb;font-size:12px;transform-origin:0 0;transform:rotate(90deg) translate(0,-8px)">Maven</div><svg style="left:1901px;top:142px" width="14" height="13" viewBox="0 0 14 13"><path d="M5 1L1 6.5l4 5.5M9 1l4 5.5-4 5.5" fill="none" stroke="#d0d0d0" stroke-width="1.6"/><path d="M9.5 3L4.5 10" stroke="#d0d0d0" stroke-width="1.6"/></svg><div class="a " style="left:1908px;top:161px;height:16px;line-height:16px;color:#bbbbbb;font-size:11px;transform-origin:0 0;transform:rotate(90deg) translate(0,-8px)">CodeGeeX</div><svg style="left:1901px;top:237px" width="14" height="14" viewBox="0 0 14 14"><path d="M8.05 7.76 L7.94 8.00 L7.77 8.22 L7.56 8.41 L7.30 8.56 L7.00 8.66 L6.68 8.70 L6.34 8.68 L6.00 8.58 L5.67 8.42 L5.37 8.19 L5.11 7.89 L4.91 7.54 L4.77 7.14 L4.71 6.71 L4.74 6.27 L4.86 5.82 L5.06 5.39 L5.35 5.00 L5.72 4.67 L6.16 4.40 L6.65 4.22 L7.18 4.13 L7.73 4.14 L8.29 4.27 L8.82 4.50 L9.31 4.83 L9.73 5.27 L10.07 5.78 L10.32 6.37 L10.45 7.00 L10.46 7.66 L10.34 8.32 L10.09 8.96 L9.72 9.56 L9.24 10.08 L8.65 10.51 L7.98 10.83 L7.25 11.02 L6.49 11.06 L5.71 10.96 L4.96 10.71 L4.25 10.32 L3.62 9.79 L3.10 9.15 L2.70 8.40 L2.44 7.58 L2.34 6.71 L2.41 5.82 L2.65 4.95 L3.05 4.13 L3.61 3.39 L4.31 2.76 L5.12 2.26 L6.03 1.92 L7.00 1.76 L8.00 1.78 L8.98 1.99 L9.92 2.39 L10.78 2.97 L11.53 3.71" fill="none" stroke="#afb1b3" stroke-width="1.200"/></svg><div class="a " style="left:1908px;top:254px;height:16px;line-height:16px;color:#bbbbbb;font-size:12px;transform-origin:0 0;transform:rotate(90deg) translate(0,-8px)">AI Assistant</div><svg style="left:1902px;top:336px" width="13" height="14" viewBox="0 0 13 14"><path d="M6 1.5c3 0 4 2.3 4 5v2.5l1.8 2H0.2l1.8-2V6.5c0-2.7 1-5 4-5z" fill="#afb1b3"/><path d="M4.5 12h3a1.5 1.5 0 0 1-3 0z" fill="#afb1b3"/><circle cx="10.5" cy="2.5" r="2.3" fill="#db5860"/></svg><div class="a c" style="left:1908px;top:352px;height:16px;line-height:16px;color:#bbbbbb;font-size:11px;transform-origin:0 0;transform:rotate(90deg) translate(0,-8px)">通知</div><div class="a" style="left:1909px;top:526px;width:9px;height:60px;border:1px solid #c9c9c9;border-radius:4.5px;background:#2d2f30;overflow:hidden"><div style="position:absolute;left:0;right:0;top:23px;bottom:0;background:linear-gradient(#1eb45a,#2fd06c)"></div></div><svg style="left:1903px;top:937px" width="11" height="13" viewBox="0 0 11 13"><path d="M0 1h11v6c0 3-3 5-5.5 6C3 12 0 10 0 7z" fill="#afb1b3"/><path d="M5.5 2.5h4V7c0 2-2 3.6-4 4.4z" fill="#3c3f41"/></svg><div class="a c" style="left:1908px;top:954px;height:16px;line-height:16px;color:#bbbbbb;font-size:11px;transform-origin:0 0;transform:rotate(90deg) translate(0,-8px)">覆盖率</div><div class="a c" style="left:28px;top:671px;height:20px;line-height:20px;color:#bbbbbb">调试:</div><svg style="left:75px;top:673px" width="16" height="15" viewBox="0 0 16 15"><path d="M3.5 0.5h11v9" fill="none" stroke="#9aa7b0" stroke-width="1"/><rect x="0.5" y="3.5" width="11" height="9" fill="#3d8db5" stroke="#9aa7b0"/><circle cx="13" cy="12.5" r="2.4" fill="#10e010" stroke="#2b2b2b" stroke-width="0.6"/></svg><div class="a " style="left:94px;top:671px;height:20px;line-height:20px;color:#bbbbbb;letter-spacing:0.200px">HelloApplication</div><svg style="left:196px;top:677px" width="8" height="8" viewBox="0 0 8 8"><path d="M0.5 0.5l7 7M7.5 0.5l-7 7" stroke="#6e6e6e" stroke-width="1" fill="none"/></svg><div class="a" style="left:62px;top:691px;width:153px;height:3px;background:#747a80;border-radius:1.5px"></div><div class="a" style="left:22px;top:694px;width:1875px;height:1px;background:#323232;"></div><div class="a" style="left:50px;top:695px;width:1px;height:302px;background:#323232;"></div><svg style="left:1851px;top:673px" width="14" height="14" viewBox="0 0 14 14"><g transform="translate(7 7)"><path d="M-1.600 -6.800h3.200l0.700 3h-4.600z" transform="rotate(0)" fill="#afb1b3"/><path d="M-1.600 -6.800h3.200l0.700 3h-4.600z" transform="rotate(60)" fill="#afb1b3"/><path d="M-1.600 -6.800h3.200l0.700 3h-4.600z" transform="rotate(120)" fill="#afb1b3"/><path d="M-1.600 -6.800h3.200l0.700 3h-4.600z" transform="rotate(180)" fill="#afb1b3"/><path d="M-1.600 -6.800h3.200l0.700 3h-4.600z" transform="rotate(240)" fill="#afb1b3"/><path d="M-1.600 -6.800h3.200l0.700 3h-4.600z" transform="rotate(300)" fill="#afb1b3"/><circle r="4.400" fill="#afb1b3"/><circle r="2.100" fill="#3c3f41"/></g></svg><div class="a" style="left:1878px;top:679px;width:12px;height:2px;background:#afb1b3;"></div><svg style="left:1879px;top:702px" width="15" height="14" viewBox="0 0 15 14"><rect x="0" y="0" width="6.5" height="5" fill="#afb1b3"/><rect x="7.5" y="0" width="6.5" height="5" fill="#afb1b3"/><rect x="0" y="6" width="14" height="5" fill="#afb1b3"/><path d="M9 12h6l-3 2.5z" fill="#afb1b3"/></svg><div class="a c" style="left:64px;top:700px;height:20px;line-height:20px;color:#bbbbbb;font-size:11px">调试器</div><div class="a c" style="left:122px;top:700px;height:20px;line-height:20px;color:#bbbbbb;font-size:11px">控制台</div><div class="a" style="left:110px;top:720px;width:58px;height:2px;background:#747a80;"></div><svg style="left:174px;top:703px" width="12" height="11" viewBox="0 0 12 11"><path d="M0 1h12M0 5.500h12M0 10h12" stroke="#5e6163" stroke-width="2"/></svg><div class="a" style="left:196px;top:698px;width:1px;height:20px;background:#515355;"></div><svg style="left:206px;top:701px" width="14" height="14" viewBox="0 0 14 14"><path d="M1 12h12" stroke="#5e6163" stroke-width="2"/><path d="M1 7.500l5-5 5 5" fill="none" stroke="#5e6163" stroke-width="1.800"/><path d="M13 3.500v6h-6z" fill="#5e6163"/></svg><svg style="left:233px;top:701px" width="13" height="14" viewBox="0 0 13 14"><path d="M0 12h12" stroke="#5e6163" stroke-width="2"/><path d="M6 0v6" stroke="#5e6163" stroke-width="2"/><path d="M1.500 4.500h9l-4.500 5z" fill="#5e6163"/></svg><svg style="left:259px;top:701px" width="13" height="14" viewBox="0 0 13 14"><path d="M0 12h12" stroke="#5e6163" stroke-width="2"/><path d="M6 9.500v-5" stroke="#5e6163" stroke-width="2"/><path d="M1.500 6h9l-4.500-5z" fill="#5e6163"/></svg><svg style="left:284px;top:701px" width="15" height="15" viewBox="0 0 15 15"><path d="M1 1l6 6" stroke="#5e6163" stroke-width="2"/><path d="M2.500 8.500h6.500v-6.500z" fill="#5e6163"/><path d="M9.500 6.500h4M9.500 14h4M11.500 6.500v7.500" stroke="#5e6163" stroke-width="1.100"/></svg><div class="a" style="left:307px;top:698px;width:1px;height:20px;background:#515355;"></div><svg style="left:318px;top:702px" width="12" height="12" viewBox="0 0 12 12"><rect width="12" height="12" fill="#5e6163"/><path d="M1.500 4.500h2.500v2h-2.500zM5 4.500h2.500v2h-2.500zM8.500 4.500h2v2h-2zM1.500 8h2.500v2.500h-2.500zM5 8h2.500v2.500h-2.500zM8.500 8h2v2.500h-2z" fill="#3c3f41"/></svg><svg style="left:344px;top:703px" width="12" height="11" viewBox="0 0 12 11"><path d="M0 1h4M0 5.500h4M0 10h4M7 1h5M7 5.500h5M7 10h5" stroke="#5e6163" stroke-width="1.800"/><path d="M4 10C6 10 5 1 7.500 1M4 1C6 1 5.500 5.500 7.500 5.500" fill="none" stroke="#5e6163" stroke-width="1.100"/></svg><svg style="left:29px;top:701px" width="15" height="16" viewBox="0 0 15 16"><path d="M9 4.2A5 5 0 1 0 12 10" fill="none" stroke="#499c54" stroke-width="2"/><path d="M8 0l5 4.2-5 4z" fill="#499c54"/><rect x="9" y="10" width="5" height="5" fill="#afb1b3"/></svg><svg style="left:29px;top:727px" width="15" height="15" viewBox="0 0 15 15"><path d="M10.5 0.5a4 4 0 0 0-3.6 5.6L0.8 12.2l2 2 6.1-6.1a4 4 0 0 0 5.5-4.7L12 5.8 9.800 5.200 9.200 3 11.600 0.600z" fill="#afb1b3"/></svg><div class="a" style="left:26px;top:750px;width:20px;height:1px;background:#515355;"></div><svg style="left:30px;top:760px" width="13" height="14" viewBox="0 0 13 14"><rect x="0" y="1" width="2.4" height="12" fill="#5e6163"/><path d="M4.5 1l8 6-8 6z" fill="#5e6163"/></svg><svg style="left:31px;top:787px" width="10" height="12" viewBox="0 0 10 12"><rect x="0" y="0" width="3.4" height="12" fill="#afb1b3"/><rect x="6.4" y="0" width="3.4" height="12" fill="#afb1b3"/></svg><div class="a" style="left:31px;top:814px;width:11px;height:11px;background:#c75450;"></div><div class="a" style="left:26px;top:835px;width:20px;height:1px;background:#515355;"></div><svg style="left:29px;top:845px" width="15" height="14" viewBox="0 0 15 14"><circle cx="5" cy="9" r="4.6" fill="#c75450"/><circle cx="10" cy="4.8" r="4.4" fill="#c75450" stroke="#3c3f41" stroke-width="1"/></svg><svg style="left:29px;top:871px" width="14" height="14" viewBox="0 0 14 14"><circle cx="7" cy="7" r="5.2" fill="#c75450"/><path d="M0.5 13.5l13-13" stroke="#3c3f41" stroke-width="3.2"/><path d="M1 13L13 1" stroke="#afb1b3" stroke-width="1.4"/></svg><div class="a" style="left:26px;top:894px;width:20px;height:1px;background:#515355;"></div><svg style="left:29px;top:905px" width="15" height="12" viewBox="0 0 15 12"><path d="M0 2.5h3.5l1.500-2h5l1.500 2H15V12H0z" fill="#afb1b3"/><circle cx="7.5" cy="7" r="3" fill="#3c3f41"/><circle cx="7.5" cy="7" r="1.500" fill="#afb1b3"/></svg><div class="a" style="left:26px;top:927px;width:20px;height:1px;background:#515355;"></div><svg style="left:29px;top:937px" width="13" height="13" viewBox="0 0 14 14"><g transform="translate(7 7)"><path d="M-1.600 -6.800h3.200l0.700 3h-4.600z" transform="rotate(0)" fill="#afb1b3"/><path d="M-1.600 -6.800h3.200l0.700 3h-4.600z" transform="rotate(60)" fill="#afb1b3"/><path d="M-1.600 -6.800h3.200l0.700 3h-4.600z" transform="rotate(120)" fill="#afb1b3"/><path d="M-1.600 -6.800h3.200l0.700 3h-4.600z" transform="rotate(180)" fill="#afb1b3"/><path d="M-1.600 -6.800h3.200l0.700 3h-4.600z" transform="rotate(240)" fill="#afb1b3"/><path d="M-1.600 -6.800h3.200l0.700 3h-4.600z" transform="rotate(300)" fill="#afb1b3"/><circle r="4.400" fill="#afb1b3"/><circle r="2.100" fill="#3c3f41"/></g></svg><svg style="left:41px;top:949px" width="5" height="3" viewBox="0 0 5 3"><path d="M0 0h5l-2.500 3z" fill="#afb1b3"/></svg><div class="a" style="left:26px;top:960px;width:20px;height:1px;background:#515355;"></div><svg style="left:29px;top:970px" width="14" height="14" viewBox="0 0 14 14"><path d="M8.500 0.500l5 5-2 0.700-2.500 2.500 0.300 3L7.500 13.500 4.500 10.500 0.500 14 0 13.500 3.500 9.500 0.500 6.500l1.800-1.800 3 0.300L7.800 2.500z" fill="#afb1b3"/></svg><svg style="left:59px;top:731px" width="12" height="14" viewBox="0 0 12 14"><path d="M6 13.500V2M1 6.500l5-5 5 5" fill="none" stroke="#afb1b3" stroke-width="1.700"/></svg><svg style="left:59px;top:757px" width="12" height="14" viewBox="0 0 12 14"><path d="M6 0.500V12M1 7.500l5 5 5-5" fill="none" stroke="#afb1b3" stroke-width="1.700"/></svg><svg style="left:58px;top:783px" width="15" height="14" viewBox="0 0 15 14"><path d="M0 1.500h14M0 6.500h11a2.800 2.800 0 0 1 0 5.600H8M0 11.500h4" fill="none" stroke="#afb1b3" stroke-width="1.600"/><path d="M9.500 9l-3 3 3 3z" fill="#afb1b3"/></svg><svg style="left:58px;top:809px" width="15" height="14" viewBox="0 0 15 14"><path d="M0 1.500h5M0 6h5M0 12.500h14" stroke="#afb1b3" stroke-width="1.600"/><path d="M10 0v7" stroke="#afb1b3" stroke-width="1.600"/><path d="M6.500 5.500h7l-3.500 4z" fill="#afb1b3"/></svg><svg style="left:58px;top:835px" width="15" height="14" viewBox="0 0 15 14"><rect x="3" y="0" width="9" height="3.500" fill="#afb1b3"/><path d="M0 4.500h15v6h-2.500v-2.500h-10v2.500H0z" fill="#afb1b3"/><rect x="3.700" y="9.200" width="7.600" height="4" fill="none" stroke="#afb1b3" stroke-width="1.400"/></svg><svg style="left:59px;top:861px" width="12" height="14" viewBox="0 0 12 14"><path d="M4 0h4v1.500h4V3H0V1.500h4z" fill="#afb1b3"/><path d="M1 4.500h10V14H1z" fill="#afb1b3"/></svg><div class="a" style="left:82px;top:722px;width:1815px;height:274px;overflow:hidden"><div class="co" style="left:9px;top:-11px">Fetched SqlSession [org.apache.ibatis.session.defaults.<span class="du">DefaultSqlSession</span>@a503059] from current transaction</div><div class="co" style="left:9px;top:11px">==>  Preparing: INSERT INTO test_version ( pid, ver ) VALUES ( ?, ? )</div><div class="co" style="left:9px;top:33px">==> Parameters: 888(String), 16(Integer)</div><div class="co" style="left:9px;top:55px">&lt;==    Updates: 1</div><div class="co" style="left:9px;top:77px">Releasing transactional SqlSession [org.apache.ibatis.session.defaults.<span class="du">DefaultSqlSession</span>@a503059]</div><div class="co" style="left:9px;top:99px">Transaction synchronization committing SqlSession [org.apache.ibatis.session.defaults.<span class="du">DefaultSqlSession</span>@a503059]</div><div class="co" style="left:9px;top:121px">Transaction synchronization deregistering SqlSession [org.apache.ibatis.session.defaults.<span class="du">DefaultSqlSession</span>@a503059]</div><div class="co" style="left:9px;top:143px">Transaction synchronization closing SqlSession [org.apache.ibatis.session.defaults.<span class="du">DefaultSqlSession</span>@a503059]</div><div class="co" style="left:9px;top:165px"><span class="r">abandon lock finally</span></div><div class="co" style="left:9px;top:187px"><span class="r">abandon <span style="background:#214283;display:inline-block;height:22px">lock</span> after commit</span></div><div class="co" style="left:9px;top:209px">2024-06-05 13:26:29.541 ERROR 23848 --- [nio-8091-exec-1] o.a.c.c.<span class="du">C</span>.[.[.[/].[dispatcherServlet]    : Servlet.service() for servlet [dispatcherServlet] in context with path [] threw exception [Request processing failed; nested</div><div class="co" style="left:9px;top:231px"></div><div class="co" style="left:9px;top:253px">java.lang.<span style="color:#a0a0a0;text-decoration:underline;text-underline-offset:2px">IllegalMonitorStateException</span>                            <span style="margin-left:-4px"> : attempt to unlock lock, not locked by current thread by node id: 6becc283-f795-49d9-a505-a80d166530da thread-id: 56</span></div></div><div class="a" style="left:395px;top:978px;width:120px;height:19px;line-height:18px;background:#373737;border-radius:4px;color:#7a7a7a;font-size:13px;letter-spacing:0.250px;text-align:center">Create breakpoint</div><div class="a" style="left:525px;top:976px;width:88px;height:20px;background:#2c3c4e;border-radius:4px"></div><svg style="left:530px;top:980px" width="14" height="12" viewBox="0 0 14 12"><path d="M5.500 1.500L1.500 6l4 4.500M8.500 1.500l4 4.500-4 4.500" fill="none" stroke="#28b4e8" stroke-width="1.700"/><path d="M8.500 1.500L5.500 10.500" stroke="#2c3c4e" stroke-width="1"/></svg><div class="a" style="left:547px;top:977px;height:18px;line-height:18px;color:#e4e6e8;font-size:9.500px">CodeGeeX</div><svg style="left:599px;top:982px" width="10" height="8" viewBox="0 0 10 8"><path d="M0 4h8.500M5.500 0.800L9 4 5.500 7.200" fill="none" stroke="#e4e6e8" stroke-width="1.300"/></svg><svg style="left:82px;top:881px" width="224" height="56" viewBox="0 0 224 56"><rect x="2.400" y="2.400" width="219.300" height="51.100" rx="3.500" fill="none" stroke="#f6221a" stroke-width="3.300"/></svg><div class="a" style="left:1888px;top:771px;width:8px;height:36px;background:rgba(128,128,128,0.42);"></div><div class="a" style="left:92px;top:988px;width:978px;height:8px;background:rgba(128,128,128,0.400);"></div><div class="a" style="left:103px;top:998px;width:57px;height:21px;background:#2d2f30;"></div><svg style="left:34px;top:1003px" width="9" height="12" viewBox="0 0 9 12"><circle cx="2" cy="2" r="1.600" fill="#afb1b3"/><circle cx="7.500" cy="3.500" r="1.600" fill="#afb1b3"/><path d="M2 2v10M7.500 3.500c0 3-5.500 2-5.500 5" fill="none" stroke="#afb1b3" stroke-width="1.300"/></svg><div class="a c" style="left:49px;top:1000px;height:20px;line-height:20px;font-size:11px">版本控制</div><svg style="left:113px;top:1002px" width="13" height="14" viewBox="0 0 13 14"><ellipse cx="6" cy="7.500" rx="3.600" ry="4.500" fill="#afb1b3"/><path d="M3 1.500l2 2M9 1.500l-2 2M0.500 5.500h2.500M0.500 8h2.500M1 11h2.500M11.500 5.500h-2.500M11.500 8h-2.500M11 11h-2.500" stroke="#afb1b3" stroke-width="1.200" fill="none"/><circle cx="10.800" cy="11.800" r="2.300" fill="#0be00b"/></svg><div class="a c" style="left:130px;top:1000px;height:20px;line-height:20px;color:#ffffff;font-size:11px">调试</div><svg style="left:170px;top:1002px" width="13" height="13" viewBox="0 0 13 13"><path d="M0.800 3.800L4.500 0.500l3 0.400-1.900 1.900 6.800 7.500-1.900 1.900-7.100-7.200-1.200 1.200z" fill="#afb1b3"/></svg><div class="a c" style="left:187px;top:1000px;height:20px;line-height:20px;font-size:11px">构建</div><svg style="left:229px;top:1004px" width="11" height="10" viewBox="0 0 11 10"><path d="M0 1h1.800M3.500 1H11M0 5h1.800M3.500 5H11M0 9h1.800M3.500 9H11" stroke="#afb1b3" stroke-width="1.600"/></svg><div class="a " style="left:244px;top:1000px;height:20px;line-height:20px;font-size:12px">TODO</div><svg style="left:296px;top:1003px" width="11" height="11" viewBox="0 0 11 11"><circle cx="5.500" cy="5.500" r="5.500" fill="#afb1b3"/><path d="M5.500 2.500v3.800M5.500 7.600v1.500" stroke="#3c3f41" stroke-width="1.500"/></svg><div class="a c" style="left:312px;top:1000px;height:20px;line-height:20px;font-size:11px">问题</div><svg style="left:353px;top:1003px" width="12" height="11" viewBox="0 0 12 11"><rect width="12" height="11" fill="#afb1b3"/><path d="M2 2.500l3 2.500-3 2.500M6 8.500h4" stroke="#3c3f41" stroke-width="1.300" fill="none"/></svg><div class="a c" style="left:369px;top:1000px;height:20px;line-height:20px;font-size:11px">终端</div><svg style="left:409px;top:1003px" width="12" height="12" viewBox="0 0 12 12"><circle cx="6" cy="6" r="6" fill="#afb1b3"/><path d="M4.500 3l4.500 3-4.500 3z" fill="#3c3f41"/></svg><div class="a c" style="left:426px;top:1000px;height:20px;line-height:20px;font-size:11px">服务</div><svg style="left:12px;top:1024px" width="13" height="13" viewBox="0 0 13 13"><rect x="0.500" y="2.500" width="9" height="9" fill="none" stroke="#afb1b3"/><path d="M2.500 0.500h9v9" fill="none" stroke="#afb1b3"/></svg><div class="a c" style="left:39px;top:1021px;height:20px;line-height:20px;word-spacing:1.700px">// 在 2秒238毫秒内成功完成编译，包含 1 个警告 (1 分钟之前)</div><div class="a " style="left:1633px;top:1021px;height:20px;line-height:20px;font-size:12.500px">110:53</div><svg style="left:1684px;top:1024px" width="14" height="13" viewBox="0 0 14 13"><ellipse cx="7" cy="6.500" rx="5.500" ry="4" fill="none" stroke="#afb1b3" stroke-width="1.200"/><path d="M1 12L13 1" stroke="#afb1b3" stroke-width="1.200"/><path d="M4 6.500h6" stroke="#afb1b3" stroke-width="1"/></svg><div class="a " style="left:1711px;top:1021px;height:20px;line-height:20px;font-size:12.500px">LF</div><div class="a " style="left:1735px;top:1021px;height:20px;line-height:20px;font-size:12.500px">UTF-8</div><svg style="left:1780px;top:1024px" width="17" height="12" viewBox="0 0 17 12"><path d="M5 1L1 6l4 5M12 1l4 5-4 5" fill="none" stroke="#d0d0d0" stroke-width="1.800"/><path d="M10.500 1L6.500 11" stroke="#d0d0d0" stroke-width="1.800"/></svg><div class="a c" style="left:1802px;top:1021px;height:20px;line-height:20px;">完成</div><div class="a c" style="left:1837px;top:1021px;height:20px;line-height:20px;">4 个空格</div><svg style="left:1895px;top:1024px" width="12" height="12" viewBox="0 0 12 12"><rect x="3" y="5.500" width="8.500" height="6.500" fill="#afb1b3"/><path d="M1.500 5.500v-2a2.300 2.300 0 0 1 4.600 0v2" fill="none" stroke="#afb1b3" stroke-width="1.400"/></svg></body></html>
